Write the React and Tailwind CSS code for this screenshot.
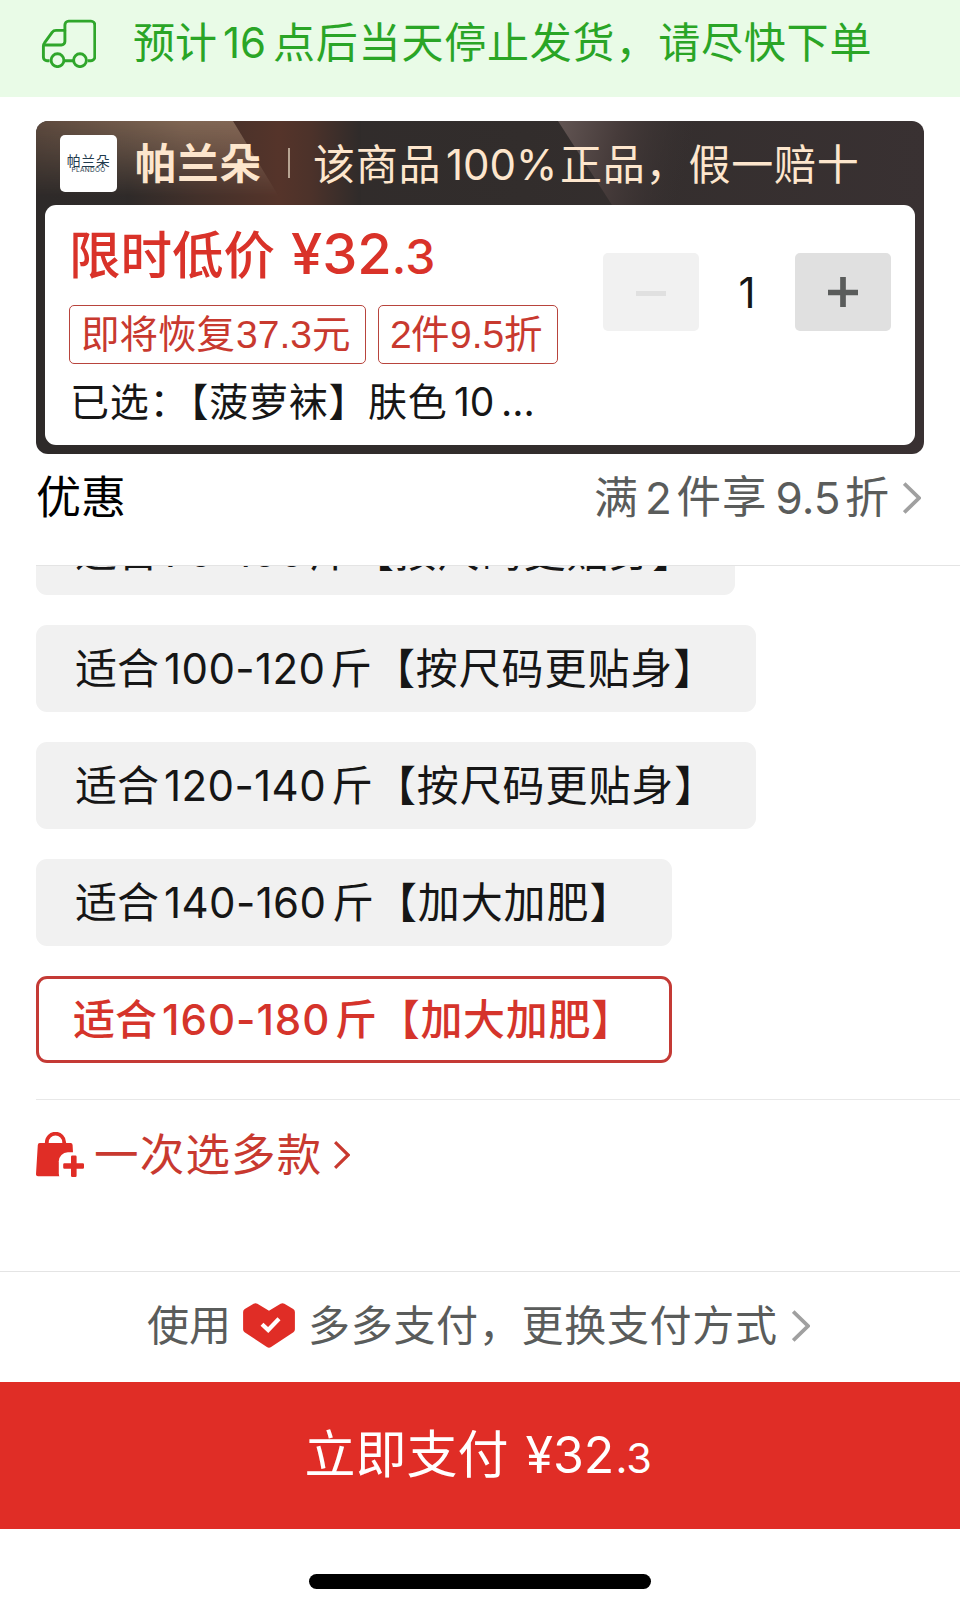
const cn = "font-['Inter','Noto_Sans_CJK_SC',sans-serif]";

function Chevron({ className, weight = 3.8 }) {
  return (
    <svg className={className} viewBox="0 0 18 32" fill="none" stroke="currentColor" strokeWidth={weight}>
      <path d="M1.2 1.5 16 16 1.2 30.5" />
    </svg>
  );
}

function Truck() {
  return (
    <svg className="ml-[41px] h-[49px] w-[55px] shrink-0" viewBox="0 0 55 49" fill="none" stroke="#2fa62b" strokeWidth="2.9" strokeLinejoin="round">
      <path d="M8.5 41.8H6a3.6 3.6 0 0 1-3.6-3.6V27a5 5 0 0 1 1.1-3.2l7.6-10.5a5 5 0 0 1 3.9-1.9h8.9V5.9a3.8 3.8 0 0 1 3.8-3.8h22.3a3.8 3.8 0 0 1 3.8 3.8v32a3.8 3.8 0 0 1-3.8 3.8h-3.2M23.6 41.8h8.6" />
      <path d="M2.6 26h17.8a3.5 3.5 0 0 0 3.5-3.5V11.4" />
      <circle cx="16.5" cy="41.2" r="6.4" />
      <circle cx="39" cy="41.2" r="6.4" />
    </svg>
  );
}

function BagPlus() {
  return (
    <svg className="h-[46px] w-[49px]" viewBox="0 0 49 46">
      <path d="M10.8 13v-2.6a8.7 8.7 0 0 1 17.4 0V13" fill="none" stroke="#e02d26" strokeWidth="3.8" />
      <path d="M3.8 11h30.8a2 2 0 0 1 2 1.9l1.5 29.2a2 2 0 0 1-2 2.1H2a2 2 0 0 1-2-2.1l1.8-29.2a2 2 0 0 1 2-1.9Z" fill="#e02d26" />
      <rect x="22.8" y="20.3" width="27" height="30" rx="9" fill="#fff" />
      <path d="M36.2 23.6h3.2a1.2 1.2 0 0 1 1.2 1.2v6.4h6.2A1.2 1.2 0 0 1 48 32.4v3.2a1.2 1.2 0 0 1-1.2 1.2h-6.2v7a1.2 1.2 0 0 1-1.2 1.2h-3.2a1.2 1.2 0 0 1-1.2-1.2v-7h-6.6a1.2 1.2 0 0 1-1.2-1.2v-3.2a1.2 1.2 0 0 1 1.2-1.2H35v-6.4a1.2 1.2 0 0 1 1.2-1.2Z" fill="#e02d26" />
    </svg>
  );
}

function PayHeart() {
  return (
    <svg className="h-[45px] w-[52px]" viewBox="0 0 52 45">
      <path d="M10.6.8a4 4 0 0 1 3.8 0L26 7.8 37.6.8a4 4 0 0 1 3.8 0L50.2 6a3.4 3.4 0 0 1 1.7 3v17.5a3.4 3.4 0 0 1-1.5 2.8L28.1 44a4 4 0 0 1-4.2 0L1.6 29.3A3.4 3.4 0 0 1 .1 26.5V9a3.4 3.4 0 0 1 1.700-3Z" fill="#e02d26" />
      <path d="M19 21.2 25.2 27 36 15.8" fill="none" stroke="#fff" strokeWidth="4.2" />
    </svg>
  );
}

function Size({ range, numWidth, note, className }) {
  return (
    <div className={"flex h-[87px] items-center rounded-[11px] bg-[#f1f1f1] pt-[2px] pl-[39px] text-[42px] leading-none text-[#161616] " + className}>
      <span className="w-[89px] shrink-0">适合</span>
      <span className={"shrink-0 tracking-[0.4px] " + numWidth}>{range}</span>
      <span className="tracking-[0.9px]">斤{note}</span>
    </div>
  );
}

export default function App() {
  return (
    <div lang="zh-CN" className={"flex h-[1613px] w-[960px] flex-col overflow-hidden whitespace-nowrap bg-white " + cn}>
      <div className="flex h-[97px] shrink-0 items-center bg-[#e9fbe7] pb-[11px] text-[42px] leading-none text-[#2aa526]">
        <Truck />
        <span className="ml-[37px] w-[90px] shrink-0">预计</span>
        <span className="w-[50px] shrink-0">16</span>
        <span className="tracking-[0.8px]">点后当天停止发货，请尽快下单</span>
      </div>

      <div className="relative mt-[24px] ml-9 flex h-[333px] w-[888px] shrink-0 flex-col overflow-hidden rounded-[12px] bg-[linear-gradient(90deg,#2e2a29,#322d2c_55%,#393132)] px-[9px] pb-[9px]">
        <svg className="absolute top-0 left-0 h-[84px] w-[888px]" viewBox="0 0 888 84">
          <defs>
            <linearGradient id="beamA" gradientUnits="userSpaceOnUse" x1="0" x2="248" y1="0" y2="0">
              <stop offset="0" stopColor="#5d4a3e" />
              <stop offset="0.6" stopColor="#806654" />
              <stop offset="1" stopColor="#846757" />
            </linearGradient>
            <linearGradient id="beamB" gradientUnits="userSpaceOnUse" x1="90" x2="325" y1="0" y2="0">
              <stop offset="0" stopColor="#2e2a29" />
              <stop offset="0.3" stopColor="#42302a" />
              <stop offset="0.65" stopColor="#55342a" />
              <stop offset="0.78" stopColor="#4d322a" />
              <stop offset="1" stopColor="#2f2b2a" />
            </linearGradient>
            <linearGradient id="beamC" x1="0" x2="1" y1="0" y2="0.15">
              <stop offset="0" stopColor="#625553" />
              <stop offset="0.45" stopColor="#463b3a" />
              <stop offset="1" stopColor="#383131" stopOpacity="0" />
            </linearGradient>
            <linearGradient id="fade" x1="0" x2="0" y1="0" y2="1">
              <stop offset="0" stopColor="#fff" />
              <stop offset="0.35" stopColor="#fff" stopOpacity="0.65" />
              <stop offset="0.9" stopColor="#fff" stopOpacity="0" />
            </linearGradient>
            <mask id="beamMask">
              <rect width="260" height="84" fill="url(#fade)" />
            </mask>
          </defs>
          <path d="M90 0H325V84H90Z" fill="url(#beamB)" />
          <path d="M0 0H197L248 84H0Z" fill="url(#beamA)" mask="url(#beamMask)" />
          <path d="M522 0H660V84H576Z" fill="url(#beamC)" />
        </svg>
        <div className="relative flex h-[84px] shrink-0 items-center text-[42px] leading-none text-[#fde6cd]">
          <div className="ml-[15px] flex size-[57px] shrink-0 flex-col items-center justify-center rounded-[5px] bg-white text-[#1f3a4d]">
            <span className="text-[14px] leading-[13px] tracking-[0.5px]">帕兰朵</span>
            <span className="text-[6.5px] leading-[6px] tracking-[0.3px]">PLANDOO</span>
          </div>
          <span className="ml-[18px] w-[153px] shrink-0 pt-[3px] text-[41.5px] font-semibold tracking-[0.8px]">帕兰朵</span>
          <span className="h-[30px] w-[1.5px] shrink-0 bg-[#b7a492]" />
          <span className="ml-[23.5px] w-[133px] shrink-0 pt-[3px] tracking-[0.8px]">该商品</span>
          <span className="w-[114px] shrink-0 pt-[3px]">100%</span>
          <span className="pt-[3px] tracking-[0.8px]">正品，假一赔十</span>
        </div>

        <div className="relative flex flex-1 rounded-[11px] bg-white">
          <div className="flex w-[558px] shrink-0 flex-col pl-[24px]">
            <div className="mt-[14px] flex h-[70px] items-baseline font-medium leading-[70px] text-[#d93229]">
              <span className="w-[222px] shrink-0 text-[51.5px]">限时低价</span>
              <span className="text-[56px]">¥32</span>
              <span className="text-[48px]">.3</span>
            </div>
            <div className="mt-[16px] flex gap-[12px] text-[38.5px] leading-none text-[#c8392f]">
              <div className="flex h-[59px] w-[297px] items-center rounded-[5px] border border-[#b8443d] pl-[11px]">
                <span className="w-[155px] shrink-0">即将恢复</span>
                <span className="w-[76px] shrink-0 font-['Liberation_Sans',sans-serif] text-[39px]">37.3</span>
                <span>元</span>
              </div>
              <div className="flex h-[59px] w-[180px] items-center rounded-[5px] border border-[#b8443d] pl-[11px]">
                <span className="w-[21px] shrink-0 font-['Liberation_Sans',sans-serif] text-[39px]">2</span>
                <span className="w-[39px] shrink-0">件</span>
                <span className="w-[54px] shrink-0 font-['Liberation_Sans',sans-serif] text-[39px]">9.5</span>
                <span>折</span>
              </div>
            </div>
            <div className="mt-[12px] flex h-[50px] items-center pl-px text-[39px] leading-none text-[#161616]">
              <span className="w-[384px] shrink-0 tracking-[0.7px]">已选：【菠萝袜】肤色</span>
              <span className="w-[47px] shrink-0">10</span>
              <span>...</span>
            </div>
          </div>
          <div className="mt-[48px] flex h-[78px] w-[288px] items-center justify-between">
            <div className="flex h-full w-[96px] items-center justify-center rounded-[5px] bg-[#f1f1f1]">
              <span className="mt-[2px] h-[5px] w-[30px] bg-[#e0e0e0]" />
            </div>
            <span className="pt-[2px] text-[42px] leading-none text-[#161616]">1</span>
            <div className="flex h-full w-[96px] items-center justify-center rounded-[5px] bg-[#e0e0e0]">
              <svg className="size-[30px]" viewBox="0 0 30 30" stroke="#5a5c5b" strokeWidth="5.7">
                <path d="M0 15.5H30M15 0V30" />
              </svg>
            </div>
          </div>
        </div>
      </div>

      <div className="flex h-[84px] shrink-0 items-center pt-[3px] pl-9 text-[45px] leading-none text-[#5a5c5b]">
        <span className="w-[558px] shrink-0 text-black">优惠</span>
        <span className="w-[51px] shrink-0 text-[44px]">满</span>
        <span className="w-[31.5px] shrink-0 text-[44px]">2</span>
        <span className="w-[99px] shrink-0 text-[44.5px] tracking-[1px]">件享</span>
        <span className="w-[69.5px] shrink-0 text-[44px]">9.5</span>
        <span className="w-[58px] shrink-0 text-[44px]">折</span>
        <Chevron className="h-[32px] w-[18px] text-[#a0a0a0]" />
      </div>

      <div className="ml-9 flex h-[561px] shrink-0 flex-col">
        <div className="mt-[27px] flex h-[29.5px] flex-col justify-end overflow-hidden border-t border-[#e4e4e4]">
          <Size range="70-100" numWidth="w-[145px]" note="【按尺码更贴身】" className="w-[699px] shrink-0" />
        </div>
        <div className="mt-[30px] flex flex-col gap-[30px]">
          <Size range="100-120" numWidth="w-[166px]" note="【按尺码更贴身】" className="w-[720px]" />
          <Size range="120-140" numWidth="w-[167px]" note="【按尺码更贴身】" className="w-[720px]" />
          <Size range="140-160" numWidth="w-[168px]" note="【加大加肥】" className="w-[636px]" />
          <div className="flex h-[87px] w-[636px] items-center rounded-[11px] border-3 border-[#c43a35] pt-[2px] pl-[34px] text-[42px] leading-none font-medium text-[#d5342b]">
            <span className="w-[89px] shrink-0">适合</span>
            <span className="w-[173px] shrink-0 tracking-[1px]">160-180</span>
            <span className="tracking-[0.7px]">斤【加大加肥】</span>
          </div>
        </div>
      </div>

      <div className="ml-9 flex h-[172px] shrink-0 border-t border-[#e8e8e8]">
        <div className="mt-[23px] flex h-[64px] items-center text-[#c8392f]">
          <BagPlus />
          <span className="ml-[9px] w-[240px] text-[44.5px] leading-none tracking-[1.2px]">一次选多款</span>
          <Chevron className="h-[32px] w-[16px]" weight={3.6} />
        </div>
      </div>

      <div className="flex h-[111px] shrink-0 items-center border-t border-[#e4e4e4] pb-[3px] pl-[147px] text-[42px] leading-none text-[#5a5c5b]">
        <span className="w-[96px] shrink-0">使用</span>
        <PayHeart />
        <span className="ml-[13px] w-[484px] shrink-0 tracking-[0.7px]">多多支付，更换支付方式</span>
        <Chevron className="h-[32px] w-[18px] text-[#a0a0a0]" />
      </div>

      <div className="flex h-[147px] shrink-0 items-baseline bg-[#e02d26] pl-[304.5px] leading-[146px] text-white">
        <span className="w-[221px] shrink-0 text-[51px]">立即支付</span>
        <span className="text-[50px]">¥32</span>
        <span className="ml-px text-[41.5px]">.3</span>
      </div>

      <div className="mx-auto mt-[45px] h-[15px] w-[342px] shrink-0 rounded-full bg-black" />
    </div>
  );
}
